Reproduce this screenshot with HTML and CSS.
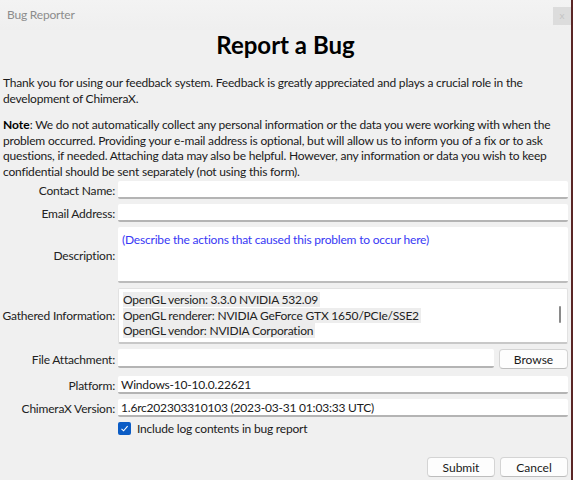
FILE: index.html
```html
<!DOCTYPE html>
<html lang="en">
<head>
  <meta charset="UTF-8" />
  <title>Bug Reporter</title>
  <link rel="stylesheet" href="styles.css">
</head>
<body>
  <div class="window">
    <div class="titlebar">
      <span class="title">Bug Reporter</span>
      <span class="close">x</span>
    </div>

    <h1>Report a Bug</h1>

    <p class="intro">Thank you for using our feedback system. Feedback is greatly appreciated and plays a crucial role in the development of ChimeraX.</p>

    <p class="note"><b>Note</b>: We do not automatically collect any personal information or the data you were working with when the problem occurred. Providing your e-mail address is optional, but will allow us to inform you of a fix or to ask questions, if needed. Attaching data may also be helpful. However, any information or data you wish to keep confidential should be sent separately (not using this form).</p>

    <form class="report">
      <label class="lbl">Contact Name:</label>
      <div class="field"></div>

      <label class="lbl">Email Address:</label>
      <div class="field"></div>

      <label class="lbl">Description:</label>
      <div class="field area desc">(Describe the actions that caused this problem to occur here)</div>

      <label class="lbl">Gathered Information:</label>
      <div class="field area info">
        <div class="info-text">
          <span>OpenGL version: 3.3.0 NVIDIA 532.09</span><br>
          <span>OpenGL renderer: NVIDIA GeForce GTX 1650/PCIe/SSE2</span><br>
          <span>OpenGL vendor: NVIDIA Corporation</span>
        </div>
        <div class="scrollbar"><i></i></div>
      </div>

      <label class="lbl">File Attachment:</label>
      <div class="file-row">
        <div class="field"></div>
        <button type="button" class="btn">Browse</button>
      </div>

      <label class="lbl">Platform:</label>
      <div class="field">Windows-10-10.0.22621</div>

      <label class="lbl">ChimeraX Version:</label>
      <div class="field">1.6rc202303310103 (2023-03-31 01:03:33 UTC)</div>

      <span></span>
      <div class="check">
        <span class="box">
          <svg width="9" height="9" viewBox="0 0 9 9"><path d="M1.5 4.8 L3.6 6.8 L7.6 2.2" fill="none" stroke="#fff" stroke-width="1.1"/></svg>
        </span>
        Include log contents in bug report
      </div>
    </form>

    <div class="actions">
      <button type="button" class="btn">Submit</button>
      <button type="button" class="btn">Cancel</button>
    </div>
  </div>
</body>
</html>
```

FILE: styles.css
```css
* {
  box-sizing: border-box;
}

body {
  margin: 0;
  font-family: 'Lato', sans-serif;
  font-size: 12px;
  letter-spacing: -0.2px;
  color: #1a1a1a;
  background: #5a2626;
}

.window {
  width: 571px;
  height: 480px;
  background: #f0f0f0;
  display: flex;
  flex-direction: column;
}

.titlebar {
  height: 30px;
  display: flex;
  justify-content: space-between;
  align-items: flex-start;
  background: linear-gradient(#f3f3f3, #efefef);
}

.title {
  margin: 7px 0 0 7px;
  color: #8c8c8c;
}

.close {
  width: 18px;
  height: 18px;
  margin-top: 7px;
  background: #dcdcdc;
  color: #c4c4c4;
  font-size: 10px;
  line-height: 17px;
  text-align: center;
}

h1 {
  margin: 0;
  font-size: 24px;
  letter-spacing: 0;
  line-height: 30px;
  text-align: center;
  color: #000;
}

p {
  margin: 0;
  padding: 0 3px;
}

.intro {
  margin-top: 15px;
  line-height: 16px;
}

.note {
  margin-top: 10px;
  line-height: 15.5px;
}

.note b {
  color: #000;
  letter-spacing: 0;
}

.report {
  display: grid;
  grid-template-columns: 115px 1fr;
  column-gap: 3px;
  row-gap: 5px;
  padding-right: 3px;
  margin-top: 2px;
  align-items: center;
}

.lbl {
  text-align: right;
  color: #222;
  white-space: nowrap;
}

.field {
  height: 18px;
  background: #fff;
  border-radius: 2px;
  border-bottom: 2px solid #b4b4b4;
  padding: 0 3px;
  line-height: 17px;
  white-space: nowrap;
}

.area {
  height: 56px;
  border-bottom-color: #bcbcbc;
}

.desc {
  padding: 5px 4px;
  line-height: 16px;
  color: #3838f5;
}

.info {
  display: flex;
  justify-content: space-between;
  padding: 3px 0 0 4px;
  border: 1px solid #e2e2e2;
  border-bottom: 2px solid #c8c8c8;
  margin-bottom: -1px;
}

.info-text {
  line-height: 15.5px;
  color: #222;
}

.info-text span {
  background: #ededed;
  padding-right: 2px;
}

.scrollbar {
  width: 15px;
  display: flex;
  justify-content: center;
}

.scrollbar i {
  width: 2px;
  height: 17px;
  margin-top: 14px;
  background: #8a8a8a;
  border-radius: 1px;
}

.file-row {
  display: flex;
  gap: 5px;
  margin-top: 1px;
  margin-bottom: 2px;
}

.file-row .field {
  flex: 1;
  height: 19px;
}

.btn {
  font-family: inherit;
  font-size: 12px;
  color: #1a1a1a;
  width: 69px;
  height: 20px;
  padding: 0;
  background: #fdfdfd;
  border: 1px solid #d4d4d4;
  border-bottom-color: #bdbdbd;
  border-radius: 4px;
}

.check {
  display: flex;
  align-items: center;
  gap: 6px;
  margin-top: -1px;
}

.box {
  width: 13px;
  height: 13px;
  background: #0b5cc5;
  border-radius: 2px;
  display: flex;
  align-items: center;
  justify-content: center;
}

.actions {
  margin-top: auto;
  display: flex;
  justify-content: flex-end;
  gap: 5px;
  padding: 0 3px 3px 0;
}

.actions .btn {
  width: 68px;
}
```
